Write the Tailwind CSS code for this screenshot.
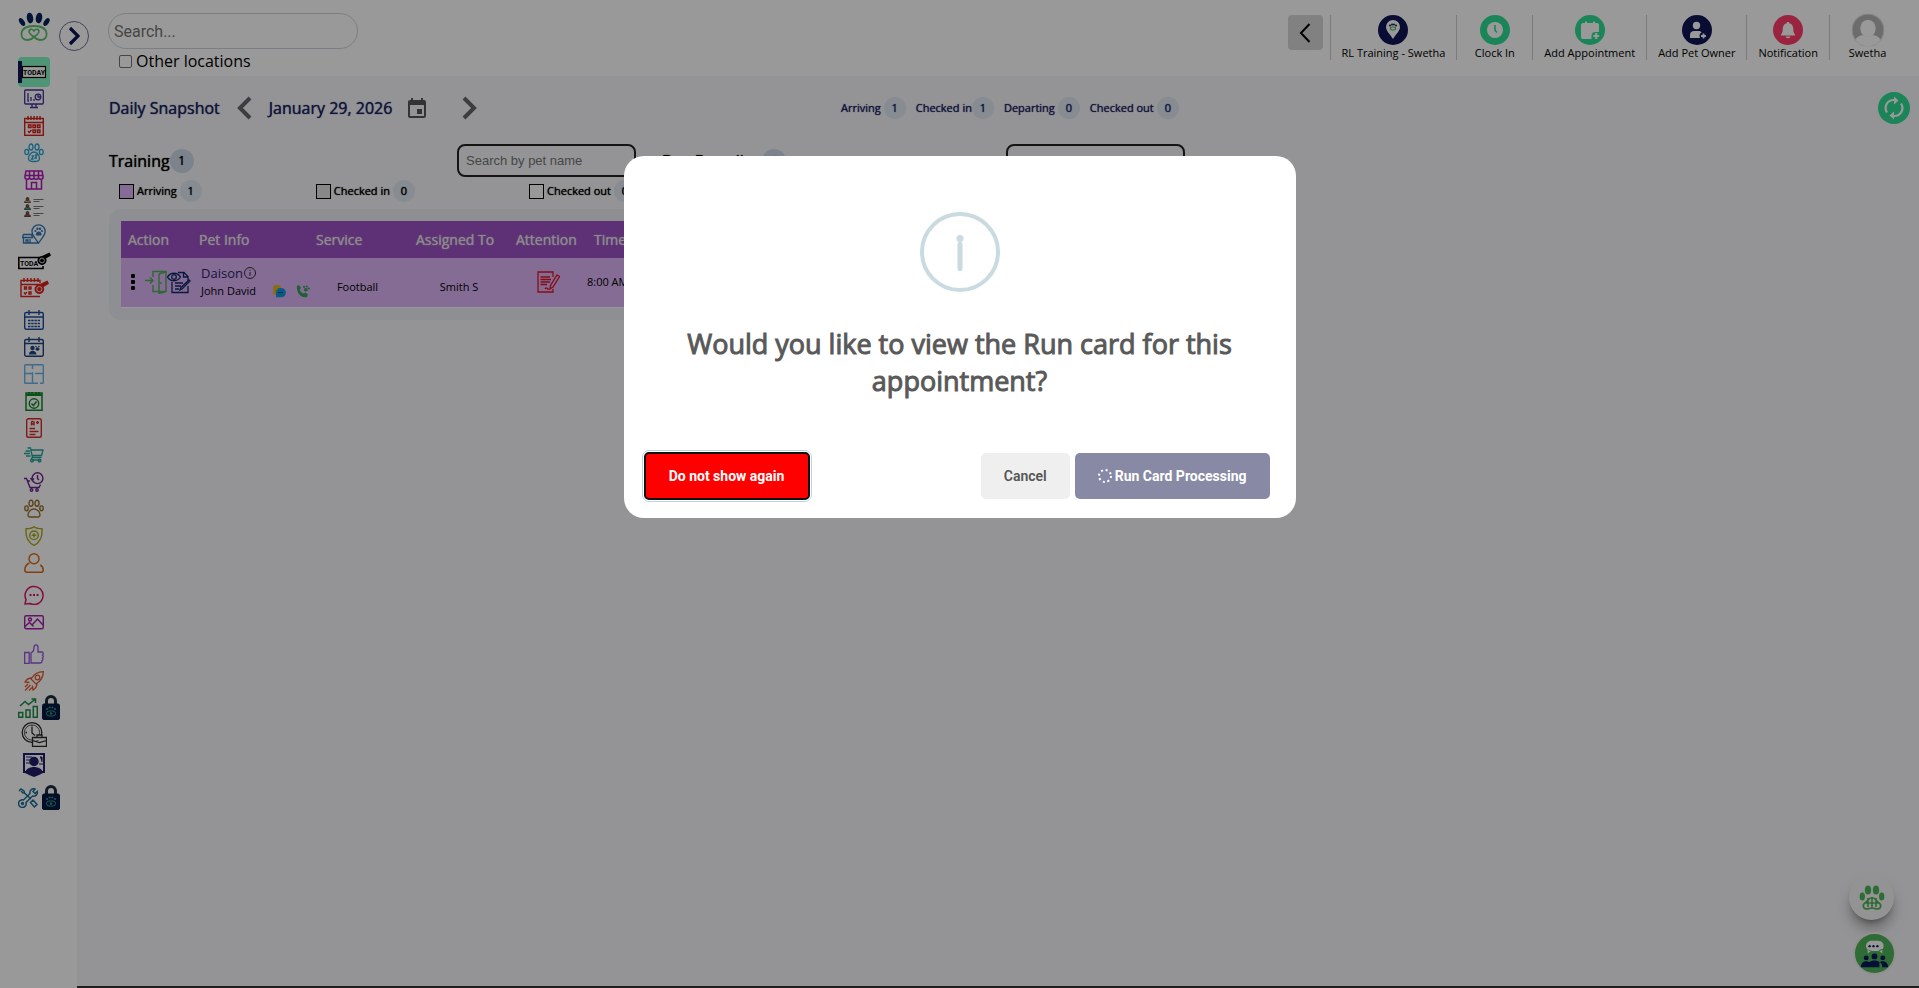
<!DOCTYPE html>
<html lang="en">
<head>
    <meta charset="UTF-8">
    <meta name="viewport" content="width=device-width, initial-scale=1.0">
    <title>Daily Snapshot</title>
    <script src="https://cdn.jsdelivr.net/npm/@tailwindcss/browser@4"></script>
</head>
<body class="min-h-screen flex overflow-hidden bg-white text-black font-['Open_Sans',sans-serif]">

    <!-- Shared symbols -->
    <svg class="hidden">
        <symbol id="lock" viewBox="0 0 18 25">
            <path d="M4.500 10V6a4.500 4.500 0 0 1 9 0v4" fill="none" stroke="#1b2a38" stroke-width="3"/>
            <rect x=".5" y="9" width="17" height="15.500" rx="1.500" fill="#05164a" stroke="#0b1c30"/>
            <g fill="#2f9c78"><circle cx="5" cy="14" r="1"/><circle cx="7.600" cy="12.500" r="1"/><circle cx="10.400" cy="12.500" r="1"/><circle cx="13" cy="14" r="1"/></g>
            <rect x="4.500" y="16" width="9" height="5" rx="2.500" fill="none" stroke="#2f9c78"/><circle cx="9" cy="18.500" r="1.200" fill="#2f9c78"/>
        </symbol>
        <symbol id="whistle" viewBox="0 0 14 14">
            <path d="M12.500.5 14 3.500 9 6.500a4.500 4.500 0 1 1-4-2.500z" fill="currentColor"/>
            <circle cx="5" cy="8.500" r="2.400" fill="none" stroke="#fff" stroke-width=".8"/>
        </symbol>
    </svg>

    <!-- Sidebar -->
    <aside class="relative w-[77px] shrink-0 pr-[9px] pt-3 flex flex-col items-center bg-white">
        <a href="#" aria-label="Home">
            <svg class="w-[32px] h-[30px]" viewBox="0 0 32 30">
                <g fill="#04245c">
                    <ellipse cx="12" cy="6" rx="3.200" ry="5.400" transform="rotate(-10 12 6)"/><ellipse cx="21" cy="6" rx="3.200" ry="5.400" transform="rotate(10 21 6)"/>
                    <ellipse cx="4" cy="10" rx="2.400" ry="4.400" transform="rotate(-32 4 10)"/><ellipse cx="28.500" cy="10" rx="2.400" ry="4.400" transform="rotate(32 28.500 10)"/>
                </g>
                <path d="M10 28c-5 0-7-3-6.500-6.500C4 16 9 14 16 14s12 2 12.500 7.500C29 25 27 28 22 28c-3 0-4.500-1.500-6-3-1.500 1.500-3 3-6 3z" fill="none" stroke="#5dc26a" stroke-width="1.800"/>
                <path d="M16 25c-2.500-2-5-3.500-5-5.500 0-2.600 3.500-3 5-.5 1.500-2.500 5-2.100 5 .5 0 2-2.500 3.500-5 5.500z" fill="none" stroke="#5dc26a" stroke-width="1.600"/>
            </svg>
        </a>
        <button aria-label="Expand menu" class="absolute left-[59px] top-[21px] z-10 size-[30px] rounded-full border border-[#6f7296] bg-white flex items-center justify-center">
            <svg class="w-3 h-5" viewBox="0 0 12 20" fill="none" stroke="#0b1452" stroke-width="3.200"><path d="M2 2l8 8-8 8"/></svg>
        </button>

        <nav class="mt-4 flex flex-col items-center">
            <a href="#" aria-label="Today" class="h-[27px] flex items-center">
                <svg class="w-[32px] h-[30px]" viewBox="0 0 32 30">
                    <rect width="32" height="30" rx="4" fill="#85f7c5"/>
                    <rect y="4" width="4" height="22" fill="#111755"/>
                    <rect x="4.500" y="9.500" width="23" height="11" fill="#fff" stroke="#000" stroke-width="1.200"/>
                    <text x="5" y="18" font-size="7" font-weight="700" font-family="Roboto, sans-serif">TODAY</text>
                </svg>
            </a>
            <a href="#" aria-label="Dashboard" class="h-[27px] flex items-center">
                <svg class="size-5" viewBox="0 0 20 20" fill="none" stroke="#46329a" stroke-width="1.300"><rect x=".7" y="1" width="18.600" height="14" rx="1"/><path d="M4 4v8h1M7 8v4M10 10v2M8 15v3M12 15v3M6 18.500h8"/><circle cx="14" cy="8" r="2.800"/><path d="M14 5v3h3"/></svg>
            </a>
            <a href="#" aria-label="Job calendar" class="h-[27px] flex items-center">
                <svg class="size-5" viewBox="0 0 20 20" fill="none" stroke="#d8201c" stroke-width="1.400"><rect x=".7" y="2.500" width="18.600" height="16.800"/><path d="M1 6.500h18M4 0v4M7 0v4M10 0v4M13 0v4M16 0v4"/><path d="M4.500 9h2.500v2.500H4.500zM9 9h2.500v2.500H9zM13.500 9H16v2.500h-2.500zM9 14h2.500v2.500H9zM13.500 14H16v2.500h-2.500zM4 15l1.200 1.500L7.500 14"/></svg>
            </a>
            <a href="#" aria-label="Pets" class="h-[27px] flex items-center">
                <svg class="size-5" viewBox="0 0 20 20" fill="none" stroke="#24a4d6" stroke-width="1.300"><ellipse cx="7" cy="4" rx="2" ry="3"/><ellipse cx="13" cy="4" rx="2" ry="3"/><ellipse cx="2.700" cy="9" rx="1.900" ry="2.600"/><ellipse cx="17.300" cy="9" rx="1.900" ry="2.600"/><path d="M4.500 15C5 11 8 9 10 9s5 2 5.500 6c.2 3-2 3.500-5.500 3.500S4.300 18 4.500 15z"/><path d="M7.500 13h2l-2 3h2M11 12h2l-2 3h2"/></svg>
            </a>
            <a href="#" aria-label="Store" class="h-[27px] flex items-center">
                <svg class="size-5" viewBox="0 0 20 20" fill="none" stroke="#b214b8" stroke-width="1.500"><path d="M2 1h16l1 5v2c-1 1.600-3.500 1.600-4.500 0-1 1.600-3.500 1.600-4.500 0-1 1.600-3.500 1.600-4.500 0C4.500 9.600 2 9.600 1 8V6zM1 5.500h18M5.500 1v7M10 1v7M14.500 1v7M2.500 9v10h15V9M7.500 19v-6.500h5V19"/></svg>
            </a>
            <a href="#" aria-label="Staff list" class="h-[27px] flex items-center">
                <svg class="size-5" viewBox="0 0 20 20"><g stroke="#3c3030" stroke-width=".8"><path d="M.5 5.500c0-3 6-3 6 0z" fill="#d9ab38"/><path d="M.5 12.500c0-3 6-3 6 0z" fill="#25b07c"/><path d="M.5 19.500c0-3 6-3 6 0z" fill="#c73a44"/><g fill="#8b5b4a"><circle cx="3.500" cy="1.900" r="1.400"/><circle cx="3.500" cy="8.900" r="1.400"/><circle cx="3.500" cy="15.900" r="1.400"/></g></g><path d="M9.500 2.500h10M9.500 4.500h6M9.500 9.500h10M9.500 11.500h6M9.500 16.500h10M9.500 18.500h6" stroke="#777" stroke-width="1.100"/></svg>
            </a>
            <a href="#" aria-label="Locations" class="h-[27px] flex items-center">
                <svg class="w-6 h-5" viewBox="0 0 24 20" fill="none" stroke="#2f78b8" stroke-width="1.300"><path d="M16.500 19c-3-4-6.500-8-6.500-11.500a6.600 6.600 0 0 1 13.200 0C23.200 11 19.500 15 16.500 19zM1.500 10.500h8l1 3H.5zM1.500 13.500V19H17M4 19v-3h2v3M8 19v-4"/><g fill="#2f78b8" stroke="none"><circle cx="13.400" cy="7" r="1.100"/><circle cx="15.400" cy="4.700" r="1.200"/><circle cx="18" cy="4.700" r="1.200"/><circle cx="19.900" cy="7" r="1.100"/><path d="M13.800 10.500c0-4 5.800-4 5.800 0 0 1.500-1.500 1-2.900 1s-2.900.5-2.900-1z"/></g></svg>
            </a>
            <a href="#" aria-label="Today training" class="h-[27px] flex items-center">
                <svg class="w-[33px] h-5 text-black" viewBox="0 0 33 20"><path d="M27 10V6.500H.8v11H25V15" fill="none" stroke="#000" stroke-width="1.600"/><text x="2" y="14.700" font-size="7" font-weight="700" font-family="Roboto, sans-serif">TODA</text><use href="#whistle" x="19" y="1" width="14" height="14"/></svg>
            </a>
            <a href="#" aria-label="Training calendar" class="h-[27px] flex items-center">
                <svg class="w-[29px] h-5 text-[#e0201c]" viewBox="0 0 29 20"><g fill="none" stroke="#e0201c" stroke-width="1.400"><path d="M20 5V2.500H1v16h19M1 6.500h19M4 0v4M7.500 0v4M11 0v4M14.500 0v4M18 0v4"/><path d="M4.500 9h2v2h-2zM9 9h2v2H9zM9 14h2v2H9zM4 14.500l1.200 1.500L7 14"/></g><use href="#whistle" x="14" y="2" width="15" height="15"/></svg>
            </a>

            <a href="#" aria-label="Calendar" class="mt-[5px] h-[27px] flex items-center">
                <svg class="size-5" viewBox="0 0 20 20" fill="none" stroke="#1f4d9e" stroke-width="1.400"><rect x=".7" y="2.500" width="18.600" height="16.800" rx="1.500"/><path d="M1 7h18M5 0v5M15 0v5"/><path d="M4 10.500h12M4 13.500h12M4 16.500h12" stroke-width="1.700" stroke-dasharray="2.500 .7"/></svg>
            </a>
            <a href="#" aria-label="Staff calendar" class="h-[27px] flex items-center">
                <svg class="size-5" viewBox="0 0 20 20" fill="none" stroke="#1f4482" stroke-width="1.400"><rect x=".7" y="2.500" width="18.600" height="16.800" rx="1.500"/><path d="M1 6.500h18M5 0v5M15 0v5"/><g fill="#1f4482" stroke="none"><circle cx="8.500" cy="11" r="2.200"/><path d="M5 17.500c0-5 7-5 7.500 0zM11.500 12.500c0-3 4-3 4 0 0 1.500-4 1.500-4 0z"/><circle cx="12" cy="9.500" r=".8"/><circle cx="15" cy="9.500" r=".8"/></g></svg>
            </a>
            <a href="#" aria-label="Floor plan" class="h-[27px] flex items-center">
                <svg class="size-5" viewBox="0 0 20 20" fill="none" stroke="#6cb2ea" stroke-width="1.400"><path d="M14 19.300H1.500c-.8 0-.8 0-.8-.8v-17c0-.8 0-.8.8-.8h17c.8 0 .8 0 .8.800v17c0 .8 0 .8-.8.800H16M8.500 1v4M8.500 8v11M1 9.500h7.500M11 9.500h8"/></svg>
            </a>
            <a href="#" aria-label="Tasks" class="h-[27px] flex items-center">
                <svg class="size-5" viewBox="0 0 20 20" fill="none" stroke="#0f8a2a" stroke-width="1.500"><path d="M2 2h16v17.300H2z"/><path d="M2 4h16M5 1v4M8 1v4M12 1v4M15 1v4" stroke-width="2"/><circle cx="10" cy="12.500" r="4.700"/><path d="M7.500 12.500l2 2 3-4"/></svg>
            </a>
            <a href="#" aria-label="Report cards" class="h-[27px] flex items-center">
                <svg class="size-5" viewBox="0 0 20 20" fill="none" stroke="#d52b2b" stroke-width="1.400"><rect x="2.700" y=".7" width="14.600" height="18.600" rx="1.800"/><path d="M7.500 7.500V4.300c0-1 2.500-1 2.500 0v3.200M7.500 6H10M12 4.500h3M13.500 3v3M5.500 10.500H11M5.500 13.500h9M5.500 16.500h6"/></svg>
            </a>
            <a href="#" aria-label="Quick cart" class="h-[27px] flex items-center">
                <svg class="size-5" viewBox="0 0 20 20" fill="none" stroke="#1fa59a" stroke-width="1.300"><path d="M3.500 3h3l2 9.500h9M7 5h12l-1.500 5.500H8M1.500 6H6M0 8.500h6M2 11h4.500M8.500 12.500c-2 1-1 2.500 0 2.500h8.500"/><circle cx="8" cy="15.600" r="1.400"/><circle cx="15.500" cy="15.600" r="1.400"/></svg>
            </a>
            <a href="#" aria-label="Order history" class="h-[27px] flex items-center">
                <svg class="size-5" viewBox="0 0 20 20" fill="none" stroke="#6c2390" stroke-width="1.400"><path d="M0 6.500h2.500L6 15.500h9l1.500-3M4 9h2"/><circle cx="13.500" cy="6.200" r="5.400"/><path d="M13.500 3v3.500l1.500 1.500M6.500 6l1.600 2 2-1.500"/><circle cx="7.500" cy="18" r="1.200"/><circle cx="13" cy="18" r="1.200"/></svg>
            </a>
            <a href="#" aria-label="Pet list" class="h-[27px] flex items-center">
                <svg class="size-5" viewBox="0 0 20 20" fill="none" stroke="#98702a" stroke-width="1.400"><ellipse cx="7" cy="4.300" rx="2" ry="3"/><ellipse cx="13" cy="4.300" rx="2" ry="3"/><ellipse cx="2.500" cy="9.300" rx="1.700" ry="2.400"/><ellipse cx="17.500" cy="9.300" rx="1.700" ry="2.400"/><path d="M4 16c0-4 3.500-6 6-6s6 2 6 6c0 2.500-2 2-6 2s-6 .5-6-2z"/></svg>
            </a>
            <a href="#" aria-label="Health" class="h-[27px] flex items-center">
                <svg class="size-5" viewBox="0 0 20 20" fill="none" stroke="#b0aa1c" stroke-width="1.400"><path d="M10 .8c2 1.700 5 2 8 2 .5 7-.5 13-8 16.500C2.500 15.800 1.500 9.800 2 2.800c3 0 6-.3 8-2z"/><circle cx="10" cy="9.300" r="4.300"/><path d="M10 7v4.600M7.700 9.300h4.600"/></svg>
            </a>
            <a href="#" aria-label="Customers" class="h-[27px] flex items-center">
                <svg class="size-5" viewBox="0 0 20 20" fill="none" stroke="#dc6a18" stroke-width="1.500"><circle cx="10" cy="5.800" r="5"/><path d="M5.500 10C2 11.500.8 14 .8 17c0 2 .5 2.200 2 2.200h14.400c1.500 0 2-.2 2-2.200 0-3-1.200-4-3-5"/></svg>
            </a>

            <a href="#" aria-label="Messages" class="mt-[5px] h-[27px] flex items-center">
                <svg class="size-5" viewBox="0 0 20 20" fill="none" stroke="#dc1466" stroke-width="1.500"><path d="M1 19l1-4.500a9 9 0 1 1 4 4z"/><path d="M5.500 10h2M9 10h2M12.500 10h2" stroke-width="1.800"/></svg>
            </a>
            <a href="#" aria-label="Gallery" class="h-[27px] flex items-center">
                <svg class="size-5" viewBox="0 0 20 20" fill="none" stroke="#a41eac" stroke-width="1.400"><rect x=".7" y="3.700" width="18.600" height="13" rx="1.500"/><circle cx="6" cy="7.500" r="1.500"/><path d="M1 14.500l4.500-4 4 4M8 13l5.500-6 5.500 6"/></svg>
            </a>

            <a href="#" aria-label="Reviews" class="mt-[5px] h-[27px] flex items-center">
                <svg class="size-5" viewBox="0 0 20 20" fill="none" stroke="#9257dc" stroke-width="1.300"><path d="M.7 8.500h4.500v10.800H.7zM7 9c2-1 3-3 3-5.500C10 0 14 0 14 3.500V8h4c1.500 0 1.500 2.500.5 3 1 .5 1 2.500 0 3 .7.500.5 2-.5 2.500.3 1.500-.5 2.500-2 2.500H7z"/></svg>
            </a>
            <a href="#" aria-label="Marketing" class="h-[27px] flex items-center">
                <svg class="size-5" viewBox="0 0 20 20" fill="none" stroke="#df5a2c" stroke-width="1.300"><path d="M19.300.7C14 .7 10 3 7 8l5 5c5-3 7.300-7 7.300-12.300zM7.500 7C4 7 2.500 8.500 1 11l4.500.5M13 12.500c0 3.500-1.500 5-4 6.500L8.500 14.500M1 16l3-3M1 19.500l5.500-5.500M5 19.500l3-3"/><circle cx="13.500" cy="6.500" r="2.300"/></svg>
            </a>
            <a href="#" aria-label="Analytics" class="ml-[10px] h-[27px] flex items-center gap-1">
                <svg class="size-5" viewBox="0 0 20 20" fill="none" stroke="#1f8c46" stroke-width="1.500"><path d="M.7 14.500h4v4.800h-4zM8 12h4v7.300H8zM15.300 8.500h4v10.800h-4zM2 8l5-4.500 3.500 3L17.500 1M13.500 1h4v4"/></svg>
                <svg class="w-[18px] h-[25px]"><use href="#lock"/></svg>
            </a>
            <a href="#" aria-label="Time sheets" class="h-[27px] flex items-center">
                <svg class="w-[26px] h-[25px]" viewBox="0 0 26 25" fill="none" stroke="#2a2a2e" stroke-width="1.300"><circle cx="11" cy="10.500" r="9.800"/><circle cx="11" cy="10.500" r="7.600" stroke-width=".8"/><path d="M11 5v6l3 2.500M4.500 10.500h1.500M11 3.500v1"/><path d="M11.500 15.500h14v9h-14zM16 15.500V13h5v2.500M11.500 18.500l7 2 7-2" fill="#fff"/></svg>
            </a>
            <a href="#" aria-label="Certificates" class="mt-[3px] h-[27px] flex items-center">
                <svg class="w-[22px] h-6" viewBox="0 0 22 24"><path d="M1 1h20v18H1z" fill="none" stroke="#221d6c" stroke-width="2"/><path d="M3 4h6M3 7h4M3 10h4M17 4h2v5M16 11h4" stroke="#221d6c"/><g fill="#221d6c"><circle cx="11" cy="8.500" r="4.700"/><path d="M2 20c1-8 17-8 18 0l-4 2-5 2-5-2z"/></g></svg>
            </a>
            <a href="#" aria-label="Settings" class="mt-[6px] ml-[10px] h-[27px] flex items-center gap-1">
                <svg class="size-5" viewBox="0 0 20 20" fill="none" stroke="#1f6f96" stroke-width="1.500"><path d="M1 3l2-2 3 2 .5 2L13 11M15 12l4 4.500-2.500 2.500-4-4.500zM12 5.500a3.800 3.800 0 0 1 5-4.500l-2 2.500 2 2 2.300-2A3.800 3.800 0 0 1 14.500 8L8 14.500A3.800 3.800 0 1 1 5.500 12zM3 3l2.500 2.500"/><circle cx="4.500" cy="15.500" r="1"/></svg>
                <svg class="w-[18px] h-[25px]"><use href="#lock"/></svg>
            </a>
        </nav>
    </aside>

    <div class="flex-1 min-w-0 flex flex-col">

        <!-- Top bar -->
        <header class="h-[76px] pl-[31px] pr-[14px] flex justify-between bg-white">
            <div class="pt-[13px]">
                <input type="text" aria-label="Search" placeholder="Search..." class="block w-[250px] h-9 px-[5px] rounded-full border border-[#ced4da] font-['Roboto',sans-serif] text-base placeholder:text-[#757575]">
                <label class="ml-[11px] flex items-center gap-1 text-base leading-6">
                    <input type="checkbox" class="appearance-none size-[13px] rounded-[2px] border border-[#767676] bg-white">Other locations
                </label>
            </div>
            <div class="pt-[15px] flex items-start text-[11px] leading-[14px]">
                <button aria-label="Collapse toolbar" class="mr-[7px] size-[35px] rounded bg-[#d8d8d8] flex items-center justify-center">
                    <svg class="w-3 h-5" viewBox="0 0 12 20" fill="none" stroke="#000" stroke-width="2"><path d="M10.500 1L2 10l8.500 9"/></svg>
                </button>
                <a href="#" class="h-[45px] min-w-[76px] px-[11px] border-l border-[#ccc] flex flex-col items-center gap-px">
                    <svg class="size-[30px]" viewBox="0 0 30 30"><circle cx="15" cy="15" r="15" fill="#111755"/><path d="M15 24c-3-5-7-8-7-12a7 7 0 0 1 14 0c0 4-4 7-7 12z" fill="#fff"/><g fill="#111755"><circle cx="12" cy="10.500" r="1"/><circle cx="14" cy="9.500" r="1"/><circle cx="16" cy="9.500" r="1"/><circle cx="18" cy="10.500" r="1"/></g><rect x="12.500" y="12" width="5" height="3" rx="1.500" fill="none" stroke="#3db45a" stroke-width="1.200"/></svg>
                    RL Training - Swetha
                </a>
                <a href="#" class="h-[45px] min-w-[76px] px-[11px] border-l border-[#ccc] flex flex-col items-center gap-px">
                    <svg class="size-[30px]" viewBox="0 0 30 30"><circle cx="15" cy="15" r="15" fill="#2ddd93"/><circle cx="15" cy="15" r="8" fill="#fff"/><path d="M15 10v5.500l2 2" fill="none" stroke="#2ddd93" stroke-width="1.600"/></svg>
                    Clock In
                </a>
                <a href="#" class="h-[45px] min-w-[76px] px-[11px] border-l border-[#ccc] flex flex-col items-center gap-px">
                    <svg class="size-[30px]" viewBox="0 0 30 30"><circle cx="15" cy="15" r="15" fill="#2ddd93"/><path d="M8 8h2V6.500h2V8h6V6.500h2V8h2c1.500 0 2 1 2 2v7h-3.500c-2.500 0-4 1.500-4 4v3H8c-1.500 0-2-1-2-2V10c0-1 .5-2 2-2z" fill="#fff"/><path d="M21.200 18v6M18.200 21h6" stroke="#fff" stroke-width="2.200"/></svg>
                    Add Appointment
                </a>
                <a href="#" class="h-[45px] min-w-[76px] px-[11px] border-l border-[#ccc] flex flex-col items-center gap-px">
                    <svg class="size-[30px]" viewBox="0 0 30 30"><circle cx="15" cy="15" r="15" fill="#111755"/><circle cx="14.500" cy="10.500" r="3.700" fill="#fff"/><path d="M8 23v-3c0-3 2-4 4-4h5c1 0 2 .5 2.500 1.500-2 1-2.500 3-1.500 5.500z" fill="#fff"/><path d="M21.500 18.500v5M19 21h5" stroke="#fff" stroke-width="1.800"/></svg>
                    Add Pet Owner
                </a>
                <a href="#" class="h-[45px] min-w-[76px] px-[11px] border-l border-[#ccc] flex flex-col items-center gap-px">
                    <svg class="size-[30px]" viewBox="0 0 30 30"><circle cx="15" cy="15" r="15" fill="#ff3c6a"/><path d="M15 7c1 0 1.300.5 1.300 1.200 3 .8 4 3 4 6 0 3 .7 4 1.700 5.300v1H8v-1c1-1.300 1.700-2.300 1.700-5.300 0-3 1-5.200 4-6C13.700 7.500 14 7 15 7zM12.500 21.500h5c-.5 2.300-4.500 2.300-5 0z" fill="#fff"/></svg>
                    Notification
                </a>
                <a href="#" class="h-[45px] min-w-[76px] px-[11px] border-l border-[#ccc] flex flex-col items-center gap-px">
                    <svg class="size-[30px] scale-110" viewBox="0 0 30 30"><circle cx="15" cy="15" r="14.500" fill="#b4b4b4" stroke="#e2e2e2"/><ellipse cx="15" cy="13.500" rx="7" ry="7.800" fill="#fff"/><path d="M3.500 24c1.500-3 4-4 7-4.500 2 2 7 2 9 0 3 .5 5.500 1.500 7 4.500a14.500 14.500 0 0 1-23 0z" fill="#fff"/></svg>
                    Swetha
                </a>
            </div>
        </header>

        <!-- Page content -->
        <main class="flex-1 pl-8 pr-[9px] bg-[#f7f7fa]">

            <!-- Date bar -->
            <div class="relative pt-4 h-12 flex items-center text-base font-medium text-[#1c2363] text-shadow-[0_0_1px_currentColor]">
                <h1>Daily Snapshot</h1>
                <button aria-label="Previous day" class="ml-4"><svg class="w-4 h-6" viewBox="0 0 16 24" fill="none" stroke="#666" stroke-width="4"><path d="M14 2L4 12l10 10"/></svg></button>
                <span class="ml-[17px]">January 29, 2026</span>
                <button aria-label="Pick a date" class="ml-4"><svg class="w-[18px] h-5" viewBox="0 0 18 20" fill="#555"><path d="M16 2h-1V0h-2v2H5V0H3v2H2C.9 2 0 2.900 0 4v14c0 1.100.9 2 2 2h14c1.100 0 2-.9 2-2V4c0-1.100-.9-2-2-2zm0 16H2V7h14v11zM9 11h5v5H9z"/></svg></button>
                <button aria-label="Next day" class="ml-9"><svg class="w-4 h-6" viewBox="0 0 16 24" fill="none" stroke="#666" stroke-width="4"><path d="M2 2l10 10L2 22"/></svg></button>
                <div class="absolute left-[732px] flex items-center gap-[10px] text-[11px]">
                    <span class="flex items-center gap-[3px]">Arriving <b class="size-[22px] rounded-full bg-[#dfe9f3] flex items-center justify-center font-medium">1</b></span>
                    <span class="flex items-center">Checked in <b class="size-[22px] rounded-full bg-[#dfe9f3] flex items-center justify-center font-medium">1</b></span>
                    <span class="flex items-center gap-[3px]">Departing <b class="size-[22px] rounded-full bg-[#dfe9f3] flex items-center justify-center font-medium">0</b></span>
                    <span class="flex items-center gap-[3px]">Checked out <b class="size-[22px] rounded-full bg-[#dfe9f3] flex items-center justify-center font-medium">0</b></span>
                </div>
                <button aria-label="Refresh" class="ml-auto"><svg class="size-8" viewBox="0 0 32 32"><circle cx="16" cy="16" r="16" fill="#2ddd93"/><path d="M9 20.500A8 8 0 0 1 15.500 8H18M23 11.500A8 8 0 0 1 16.500 24H14" fill="none" stroke="#fff" stroke-width="2.200"/><path d="M16 4.500L20.500 8.500 16 12.500zM16 19.500L11.500 23.500l4.500 4z" fill="#fff"/></svg></button>
            </div>

            <div class="mt-5 flex gap-[26px]">
                <!-- Training -->
                <section class="w-[527px] shrink-0">
                    <div class="flex items-center text-shadow-[0_0_1px_currentColor]">
                        <h2 class="text-base font-medium">Training</h2>
                        <b class="size-6 rounded-full bg-[#cfdbe9] flex items-center justify-center text-xs font-medium">1</b>
                        <input type="text" aria-label="Search training by pet name" placeholder="Search by pet name" class="ml-auto w-[179px] h-[33px] px-[7px] rounded-lg border-2 border-[#222] font-['Liberation_Sans',sans-serif] text-[13px] text-shadow-none placeholder:text-[#757575]">
                    </div>
                    <div class="mt-[3px] pl-[10px] flex items-center justify-between text-[11px] font-medium text-shadow-[0_0_1px_currentColor]">
                        <span class="flex items-center"><i class="mr-[3px] size-[15px] border border-black bg-[#dcb4f8]"></i>Arriving <b class="ml-[3px] size-[22px] rounded-full bg-[#dfe9f3] flex items-center justify-center font-medium">1</b></span>
                        <span class="flex items-center"><i class="mr-[3px] size-[15px] border border-black bg-[#e3e3e3]"></i>Checked in <b class="ml-[3px] size-[22px] rounded-full bg-[#dfe9f3] flex items-center justify-center font-medium">0</b></span>
                        <span class="flex items-center"><i class="mr-[3px] size-[15px] border border-black bg-white"></i>Checked out <b class="ml-[3px] size-[22px] rounded-full bg-[#dfe9f3] flex items-center justify-center font-medium">0</b></span>
                    </div>
                    <div class="mt-[7px] p-3 rounded-xl bg-[#edeff3]">
                        <table class="w-full table-fixed">
                            <thead class="bg-[#9d53c5] text-[#e8e8e8] text-sm text-shadow-[0_0_1px_currentColor]">
                                <tr class="h-[37px] text-left">
                                    <th class="w-[78px] pl-[7px] font-medium">Action</th>
                                    <th class="w-[105px] font-medium">Pet Info</th>
                                    <th class="w-[105px] pl-3 font-medium">Service</th>
                                    <th class="w-[100px] pl-[7px] font-medium">Assigned To</th>
                                    <th class="w-[78px] pl-[7px] font-medium">Attention</th>
                                    <th class="pl-[7px] font-medium">Time</th>
                                </tr>
                            </thead>
                            <tbody class="bg-[#dcb4f8] text-[11px]">
                                <tr class="h-[49px] border-b border-white">
                                    <td class="pl-[10px]">
                                        <div class="flex items-center">
                                            <button aria-label="More"><svg class="w-1 h-4" viewBox="0 0 4 16"><rect width="4" height="4" rx="1"/><rect y="6" width="4" height="4" rx="1"/><rect y="12" width="4" height="4" rx="1"/></svg></button>
                                            <button aria-label="Check in" class="ml-[10px]"><svg class="w-[22px] h-6" viewBox="0 0 22 24" fill="none" stroke="#4caf50" stroke-width="1.400"><path d="M8 7V1.500h13v20h-7M8 15v6.500h6M14 4l7-2.500M14 4v19.500l7-2M0 10.500h8M5 7.500l3 3-3 3M16 12v2"/></svg></button>
                                            <button aria-label="View card"><svg class="w-6 h-6" viewBox="0 0 24 24" fill="none" stroke="#0f2a66" stroke-width="1.300"><path d="M.5 7c3-5 10-5 13 0-3 5-10 5-13 0z"/><circle cx="7" cy="7" r="2.300"/><path d="M5 12v10.500h16V16M11 2.500h6l4 4v4M16.500 2.500V7H21M8 13h8M8 16h6M8 19h4M23 11l-8 8-2 1 1-2.500 8-7.500z"/></svg></button>
                                        </div>
                                    </td>
                                    <td class="pl-[2px] whitespace-nowrap">
                                        <div class="flex items-center gap-px text-[13px] leading-[18px] text-[#2b2464]">Daison
                                            <svg class="size-3" viewBox="0 0 12 12" fill="none" stroke="#333"><circle cx="6" cy="6" r="5.500"/><path d="M6 5v4M6 2.800v1.200"/></svg>
                                        </div>
                                        <div class="flex items-center leading-[18px]">John David
                                            <svg class="ml-4 w-[14px] h-[13px] shrink-0" viewBox="0 0 14 13"><path d="M1 9V4a4 4 0 0 1 8-1l-5 7z" fill="#e5b622"/><path d="M8.500 3a4.700 4.700 0 1 1 0 9.300H4V7.500A4.600 4.600 0 0 1 8.500 3z" fill="#1296e0"/><path d="M6 7.600h5" stroke="#064c88"/></svg>
                                            <svg class="ml-[10px] w-[14px] h-[13px] shrink-0" viewBox="0 0 14 13" fill="#33a355"><path d="M1 1l2-1 2 3-1.300 1.500c.5 2 2 3.500 4 4L9.500 7.500l2.500 2-1 2.500C5 14 0 7 1 1z"/><circle cx="8" cy="1.800" r="1.100"/><circle cx="10.700" cy="1.500" r="1.100"/><circle cx="12.800" cy="3.500" r="1.100"/><ellipse cx="9.800" cy="4.800" rx="2" ry="1.700"/></svg>
                                        </div>
                                    </td>
                                    <td class="pt-[10px] pl-[2px] text-center">Football</td>
                                    <td class="pt-[10px] text-center">Smith S</td>
                                    <td class="pl-7"><svg class="w-[23px] h-[22px]" viewBox="0 0 23 22" fill="none" stroke="#e0141c" stroke-width="1.300"><path d="M16 6V1H1v20h15v-3M3.500 6H13M3.500 8.500H14M3.500 11H13M3.500 13.500H10M20 4l2.500 1.500L16 16l-3 2 .5-3.500zM8 18c2-3 2 1 4 0"/></svg></td>
                                    <td class="whitespace-nowrap">8:00 AM</td>
                                </tr>
                            </tbody>
                        </table>
                    </div>
                </section>

                <!-- Day Boarding -->
                <section class="w-[523px] shrink-0">
                    <div class="flex items-center text-shadow-[0_0_1px_currentColor]">
                        <h2 class="text-base font-medium">Day Boarding</h2>
                        <b class="size-6 rounded-full bg-[#cfdbe9] flex items-center justify-center text-xs font-medium">1</b>
                        <input type="text" aria-label="Search day boarding by pet name" placeholder="Search by pet name" class="ml-auto w-[179px] h-[33px] px-[7px] rounded-lg border-2 border-[#222] font-['Liberation_Sans',sans-serif] text-[13px] text-shadow-none placeholder:text-[#757575]">
                    </div>
                </section>
            </div>
        </main>
        <div class="h-[2px] bg-[#333]"></div>
    </div>

    <!-- Floating buttons -->
    <div class="fixed right-[25px] bottom-[13px] flex flex-col items-end gap-3">
        <button aria-label="Pet assistant" class="size-[45px] rounded-full bg-[#f6f6f6] shadow-lg shadow-black/40 flex items-center justify-center">
            <svg class="size-[26px]" viewBox="0 0 26 26"><g fill="#4fb257"><ellipse cx="9" cy="5" rx="3.200" ry="4.600"/><ellipse cx="17" cy="5" rx="3.200" ry="4.600"/><ellipse cx="3.300" cy="11.500" rx="2.700" ry="4"/><ellipse cx="22.700" cy="11.500" rx="2.700" ry="4"/></g><path d="M8 24c-4 0-5-4-2-6l3-3c2-3 6-3 8 0l3 3c3 2 2 6-2 6-2 0-3-1-5-1s-3 1-5 1zM9 13v9M13 12v11M17 13v9M6 18h14" fill="none" stroke="#4fb257" stroke-width="1.600"/></svg>
        </button>
        <button aria-label="Community chat" class="size-[43px] -mr-[2px] rounded-full bg-[#4fb257] border-2 border-[#f0f0f2]">
            <svg class="size-full" viewBox="0 0 40 40"><path d="M17 7h7c7 0 7 10 1 10.500h-8c-8-.5-7-10.500 0-10.500zM13 16v4l4-3zM24 17l4 3v-5z" fill="#fff"/><g fill="#06195c"><circle cx="15" cy="12.500" r="1.200"/><circle cx="19" cy="12.500" r="1.200"/><circle cx="23" cy="12.500" r="1.200"/><circle cx="20" cy="23" r="3"/><circle cx="11.500" cy="24.500" r="2.500"/><circle cx="28.500" cy="24.500" r="2.500"/><path d="M12 34c0-9 16-9 16 0zM6 34c0-7 7-7 9-5v5zM34 34c0-7-7-7-9-5v5z"/></g></svg>
        </button>
    </div>

    <!-- Run card dialog -->
    <div class="fixed inset-0 z-20 bg-black/40 flex items-start justify-center">
        <div role="dialog" aria-labelledby="dialogTitle" class="mt-[156px] w-[672px] rounded-[20px] bg-white px-5 pt-14 pb-[18px] flex flex-col items-center">
            <svg class="size-20" viewBox="0 0 80 80"><circle cx="40" cy="40" r="38" fill="none" stroke="#c9dae1" stroke-width="4"/><circle cx="40" cy="26.500" r="3.500" fill="#c9dae1"/><rect x="37.500" y="30" width="5" height="29" rx="2" fill="#c9dae1"/></svg>
            <h2 id="dialogTitle" class="mt-[33px] px-8 text-center text-[27px] leading-[37px] font-medium text-[#595959] [-webkit-text-stroke:1px_#595959]">Would you like to view the Run card for this appointment?</h2>
            <div class="mt-[53px] w-full pr-[6px] flex items-center font-['Roboto',sans-serif] text-sm">
                <button class="h-12 w-[166px] rounded-[5px] border-2 border-[#101010] bg-[red] text-white font-bold outline outline-1 outline-offset-1 outline-[#b8d3ea]">Do not show again</button>
                <button class="ml-auto h-[46px] px-[23px] rounded-[5px] bg-[#efefef] text-[#555] font-semibold">Cancel</button>
                <button class="ml-[5px] h-[46px] px-[23px] rounded-[5px] bg-[#888aa5] text-white font-bold flex items-center gap-[3px]">
                    <svg class="size-[14px]" viewBox="0 0 14 14" fill="none" stroke="#fff" stroke-width="2"><circle cx="7" cy="7" r="6" stroke-dasharray="2 2.700"/></svg>
                    Run Card Processing
                </button>
            </div>
        </div>
    </div>

</body>
</html>
